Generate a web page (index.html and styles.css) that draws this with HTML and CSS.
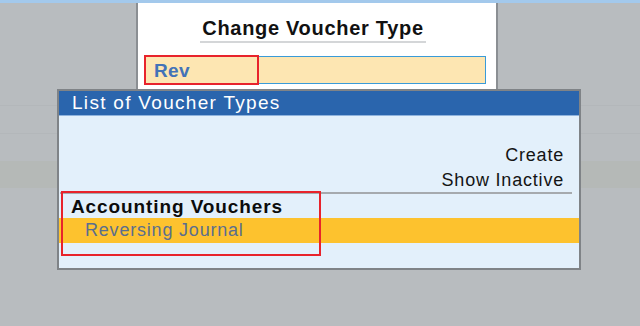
FILE: index.html
```html
<!DOCTYPE html>
<html lang="en">
<head>
    <meta charset="UTF-8">
    <title>Change Voucher Type</title>
    <link rel="stylesheet" href="styles.css">
</head>
<body>
    <div class="topbar"></div>
    <div class="dialog">
        <div class="dialog-title"><span>Change Voucher Type</span></div>
        <div class="type-input">
            <span class="typed mark">Rev</span>
        </div>
    </div>
    <div class="list">
        <div class="list-header">List of Voucher Types</div>
        <div class="list-body">
            <div class="actions">
                <div class="action">Create</div>
                <div class="action">Show Inactive</div>
            </div>
            <div class="group">Accounting Vouchers</div>
            <div class="item selected">Reversing Journal</div>
            <div class="mark group-mark"></div>
        </div>
    </div>
</body>
</html>
```

FILE: styles.css
```css
:root {
    --bg: #b8bcbf;
    --frame: #7f8387;
    --blue: #2a65ad;
    --panel: #e3f0fb;
    --yellow: #fdc22e;
    --red: #e8232b;
}
* { box-sizing: border-box; }
body {
    margin: 0;
    height: 326px;
    overflow: hidden;
    font-family: 'Liberation Sans', Arial, sans-serif;
    background:
        linear-gradient(to bottom,
            transparent 105px, #b3b7ba 105px, #b3b7ba 106px, transparent 106px,
            transparent 133px, #b3b7ba 133px, #b3b7ba 134px, transparent 134px,
            transparent 161px, #b5b9b7 161px, #b5b9b7 188px, transparent 188px),
        var(--bg);
}
.topbar {
    height: 3px;
    background: #a3c9ec;
}
.dialog {
    margin-left: 136px;
    width: 362px;
    height: 86px;
    background: #fff;
    border-left: 2px solid #8b8f93;
    border-right: 2px solid #8b8f93;
    padding: 14px 10px 0 6px;
}
.dialog-title {
    text-align: center;
    padding-right: 4px;
}
.dialog-title span {
    display: inline-block;
    font-size: 20px;
    font-weight: bold;
    line-height: 23px;
    letter-spacing: 0.7px;
    color: #111;
    padding: 0 2px 1px;
    border-bottom: 2px solid #d4d6d8;
}
.type-input {
    margin-top: 13px;
    height: 28px;
    background: #fde6b2;
    border: 1px solid #3a9bd8;
}
.typed {
    display: block;
    width: 115px;
    height: 30px;
    margin: -2px 0 0 -1px;
    padding-left: 8px;
    font-size: 19px;
    font-weight: bold;
    line-height: 28px;
    letter-spacing: 0.3px;
    color: #4373b8;
}
.mark {
    border: 2px solid var(--red);
}
.list {
    margin-left: 57px;
    width: 524px;
    height: 181px;
    border: 2px solid var(--frame);
    background: var(--panel);
}
.list-header {
    height: 25px;
    background: var(--blue);
    color: #fff;
    font-size: 19px;
    line-height: 24px;
    letter-spacing: 1.3px;
    padding-left: 13px;
    border-bottom: 1px solid #8fb3dd;
}
.list-body {
    position: relative;
    padding-top: 27px;
    font-size: 18px;
    letter-spacing: 0.8px;
}
.actions {
    margin: 0 7px 0 1px;
    border-bottom: 2px solid #a6aaae;
}
.action {
    text-align: right;
    line-height: 25px;
    padding-right: 8px;
    color: #141414;
}
.action + .action {
    line-height: 24px;
}
.group {
    padding-left: 12px;
    line-height: 23px;
    font-size: 19px;
    font-weight: bold;
    letter-spacing: 0.9px;
    color: #0c0c0c;
    margin-top: 1px;
}
.item {
    height: 25px;
    line-height: 25px;
    padding-left: 26px;
    color: #5a6e8e;
}
.item.selected {
    background: var(--yellow);
}
.group-mark {
    position: absolute;
    left: 2px;
    top: 75px;
    width: 260px;
    height: 65px;
}
```
